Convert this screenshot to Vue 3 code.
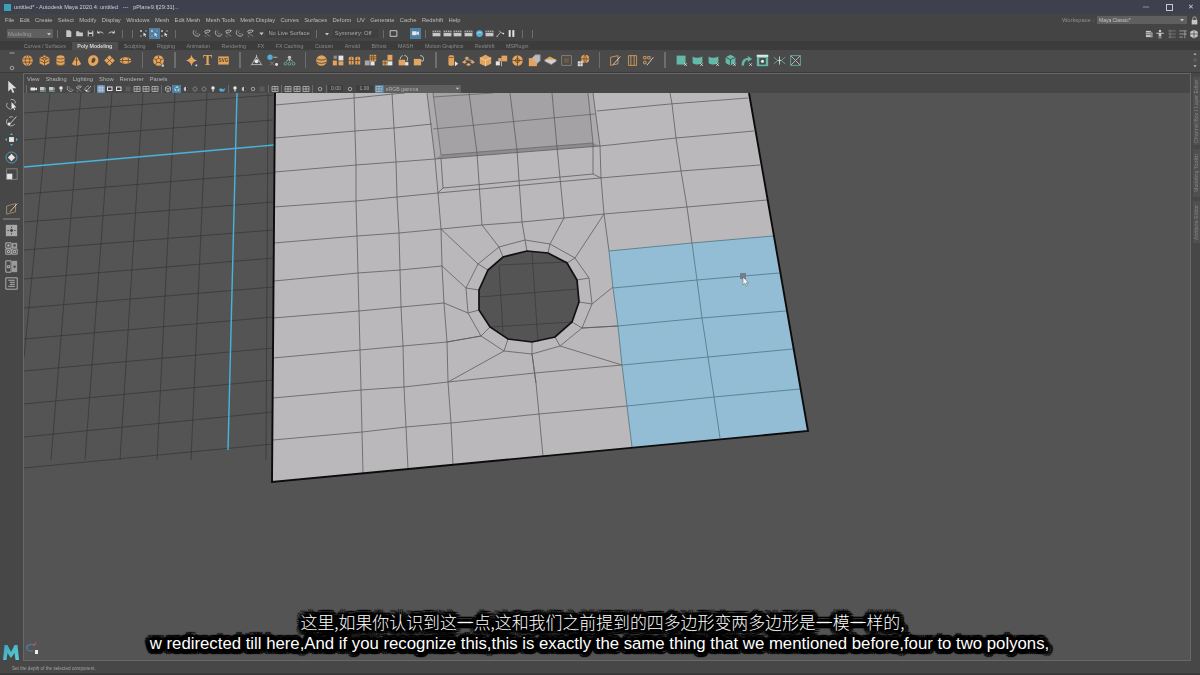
<script setup>
import { h } from 'vue'

const O = '#e2a45f', D = '#6a4a26', N = 'none', G = '#c6c6c6', W = '#e6e6e6', T = '#63b9a7', B = '#52aed6', K = '#3c3c3c', M = '#8d8d8d'
const c = (x, y, r) => `M${x - r} ${y}a${r} ${r} 0 1 0 ${2 * r} 0a${r} ${r} 0 1 0 ${-2 * r} 0Z`
const r = (x, y, w, hh) => `M${x} ${y}h${w}v${hh}h${-w}z`
const xmark = ['M11.5 11.5l3 3M14.5 11.5l-3 3', N, W]

const icons = {
  sphere: [[c(8, 8, 6.4), O], ['M2 6h12M2 10h12M8 1.6c-3.6 3-3.6 9.8 0 12.8M8 1.6c3.6 3 3.6 9.8 0 12.8', N, D]],
  cube: [['M8 1.5l6 3v7l-6 3-6-3v-7z', O], ['M2 4.5l6 3 6-3M8 7.5v7M5 3l6 3M11 3L5 6M2 8l6 3 6-3', N, D]],
  cyl: [['M3 4c0-3.4 10-3.4 10 0v8c0 3.4-10 3.4-10 0z', O], ['M3 4c0 2.8 10 2.8 10 0M3 8c0 2.8 10 2.8 10 0M3 12c0 2.8 10 2.8 10 0', N, D]],
  cone: [['M8 2l5.5 10c0 3-11 3-11 0z', O], ['M5.5 7c1 1 4 1 5 0M8 2v12', N, D]],
  torus: [['M9 1.5c4 .5 6 5 4.5 9s-7 5.5-10 3-2.5-8-.5-10S7 1.3 9 1.5z', O], ['M9 5c1.5 1 1 4-.5 5S5.5 11 6 8.5 7.5 4.5 9 5z', '#484848', D]],
  diamond: [['M8 1.5l6.5 6.5L8 14.5 1.5 8z', O], ['M4.7 4.7l6.6 6.6M11.3 4.7l-6.6 6.6', N, D]],
  disc: [['M8 4c4 0 7 1.6 7 4s-3 4-7 4-7-1.6-7-4 3-4 7-4z', O], ['M1 8h14M5 4.6c-1 2-1 4.8 0 6.8M11 4.6c1 2 1 4.8 0 6.8', N, D]],
  soccer: [[c(8, 8, 6.6), O], ['M8 5l3 2-1 3.5H6L5 7zM8 5V1.5M11 7l3-1.5M10 10.5l2 3M6 10.5l-2 3M5 7L2 5.5', N, D], [r(12, 13, 2.5, 2.5), W]],
  star: [['M8 1c.8 4 3 6.2 7 7-4 .8-6.2 3-7 7-.8-4-3-6.2-7-7 4-.8 6.2-3 7-7z', O], [r(13, 13, 2, 2), W]],
  tt: [['text', 'T', O, 17]],
  svg: [[r(1.5, 3, 13, 10), O], ['text', 'SVG', '#5a3c1e', 5.5]],
  loc: [['M8 3l6 10H2z', N, G], [c(8, 9, 2.5), W], ['M8 1v4M2 13l-1 1M14 13l1 1', N, G]],
  bdot: [[c(5, 4, 3.3), B], ['M5 9l5 5M10 9l-5 5', N, M], ['M9 4h5', N, G], [c(13, 13, 1.8), W]],
  tdots: [[c(8, 4, 2), G], ['M8 6L4 9M8 6l4 3M8 6v3', N, G], [c(3, 12, 1.7), N, T], [c(8, 12, 1.7), N, T], [c(13, 12, 1.7), N, T]],
  globe: [[c(8, 8, 6.5), O], ['M2 6c3 2 9 2 12 0M2 10c3 2 9 2 12 0', N, '#3f3f3f']],
  tiles: [[r(1, 8, 5, 6), O], [r(8, 2, 6, 6), W], [r(8, 9, 6, 5), O], [r(2, 2, 4, 4), M]],
  twocyl: [['M1 5c0-2 6-2 6 0v8H1zM9 5c0-2 6-2 6 0v8H9z', O], ['M1 8h6M9 8h6M4 4v9M12 4v9', N, D]],
  check: [[r(7, 1, 8, 8), O], [r(1, 8, 6, 6), '#a8a8a8'], [r(8, 9, 5, 5), W], ['M9.5 1v8M12 1v8M7 3.5h8M7 6h8', N, D]],
  tile2: [[r(8, 1, 6, 7), O], [r(2, 8, 6, 6), O], [r(8, 9, 6, 5), W], ['M2 11h6M5 8v6', N, D]],
  curve: [[r(2, 7, 8, 7), O], ['M9 2c4 0 5 4 3 7M4 6c0-2 1-3 3-4', N, W], [r(10, 10, 4, 4), W]],
  curve2: [[r(1, 6, 9, 8), O], ['M9 2c4 0 5 4 3 7l-2-1', N, W]],
  cylarrow: [['M3 3c0-2 7-2 7 0v10c0 2-7 2-7 0z', O], ['M3 3c0 2 7 2 7 0', N, D], ['M11 9l4 3-4 3z', W]],
  nodes: [['M6 3l3 2-3 2-3-2zM3 8l3 2-3 2-3-2zM13 8l3 2-3 2-3-2zM8 11l3 2-3 2-3-2z', O], ['M6 7l-3 1M6 7l7 1', N, G]],
  bigcube: [['M8 1l7 3.5v7.5L8 15l-7-3V4.5z', O], ['M1 4.5L8 8l7-3.5M8 8v7', N, '#ead2ad']],
  cubes: [[r(8, 2, 7, 7), O], [r(1, 9, 5, 5), W], [r(4, 5, 4, 4), O], ['M8 9v6', N, G]],
  net: [[c(8, 8, 6.5), O], [c(8, 8, 2.5), N, D], ['M1.5 8h13M8 1.5v13', N, D]],
  boxc: [[r(1, 5, 10, 10), O], ['M5 5l4-4h6v7l-4 4', '#bbb', M]],
  flat: [['M7 3l8 4-6 4-8-4z', O], ['M1 7v2l8 4 6-4V7', '#d2d2d2', M]],
  outl: [[r(2, 2, 12, 12), N, M], ['M2 2l4 4h4l4-4M2 14l4-4h4l4 4M6 6v4M10 6v4', N, D], [r(5, 5, 6, 6), '#6d5a45']],
  tsph: [[c(10, 6, 5), O], ['M5 6h10M10 1c-2 2-2 8 0 10M10 1c2 2 2 8 0 10', N, D], [r(1, 9, 6, 6), W], ['M1 12h6M4 9v6', N, M]],
  pen1: [['M2 4l9-2v10l-9 2z', N, O], ['M5 13L14 3', N, W]],
  pen2: [[r(3, 2, 10, 12), N, O], ['M6 2v12M10 2v12', N, O]],
  pen3: [['M2 3h3v3H2zM7 3h3v3H7zM2 9h3v3H2z', N, O], ['M6 14l8-10', N, W]],
  gsq: [[r(2, 2, 11, 11), T], xmark],
  gcup: [['M2 3c3 2 8 2 12 0v7c-1 3-9 4-12 1z', T], xmark],
  gcube: [['M8 1l6 3v7l-6 3-6-3V4z', T], ['M2 4l6 3 6-3M8 7v7', N, '#3f3f3f'], xmark],
  gcurve: [['M2 14c0-6 3-9 8-9l-1-3 6 4-6 4 1-3c-3 0-5 3-5 7z', T], xmark],
  gbox: [[r(1, 1, 14, 14), T], [r(1, 1, 14, 2.5), W], [r(4, 5, 8, 8), '#484848'], [c(8, 9, 2), W]],
  gx: [['M1 4l5 4-5 4M15 4l-5 4 5 4', N, T], ['M6 8h4M8 3v10', N, W]],
  gx2: [['M2 2l12 12M14 2L2 14', N, G], [r(2, 2, 12, 12), N, T]],
  doc: [['M4 2h6l3 3v9H4z', G]],
  fold: [['M2 4h5l1 2h6v7H2z', G]],
  save: [[r(3, 3, 10, 10), G], [r(5, 3, 6, 3), K], [r(5, 9, 6, 4), K]],
  undo: [['M3 7c3-3 8-2 10 1M3 3v4h4', N, W]],
  redo: [['M13 7c-3-3-8-2-10 1M13 3v4H9', N, W]],
  sel1: [[r(2, 2, 3, 3), W], [r(11, 2, 3, 3), M], [r(2, 11, 3, 3), M], ['M8 6v7l2-2 1.5 3 1-.5-1.5-3h2.5z', W]],
  magnet: [['M4 2c-3 3-2 8 2 10s8 0 8-3', N, G], ['M8 3a3 3 0 1 0 4 4', N, M]],
  magnet2: [['M3 4c2-2 7-3 10-1l-3 3c-2-1-4 0-5 2z', N, G], ['M5 8l8 5M3 12l3 2', N, M]],
  cam: [[r(2, 4, 8, 7), W], ['M10 6l4-2v7l-4-2z', W]],
  box: [[r(2, 3, 12, 10), N, W]],
  cam2: [[r(2, 4, 9, 7), G], ['M11 6l3-1v6l-3-1z', M], ['M2 13h12', N, T]],
  film: [[r(1, 3, 14, 10), G], ['M1 6h14', N, K], ['M4 3v3M8 3v3M12 3v3', N, K]],
  swirl: [[c(8, 8, 6), B], ['M4 8c2-3 6-3 8 0', N, W]],
  graph: [['M2 13l6-7M8 6l5 2M8 6l-2-3', N, G], [c(2, 13, 1.5), T], [c(13, 8, 1.5), W]],
  pause: [[r(3, 2, 3.5, 12), W], [r(9.5, 2, 3.5, 12), W]],
  fdown: [['M4 6h8l-4 5z', G]],
  arrow: [['M4 1v13l3.2-3 2.3 5 2-1-2.2-4.8H14z', '#dcdcdc']],
  lasso: [['M7 2c4-1 7 2 5 5M3 6c-2 3-1 6 2 7M5 13l2 1', N, G], ['M8 5v9l2-2 1.5 3 1-.6-1.4-2.8H14z', W]],
  paint: [['M3 5c-2 3-1 7 2 8s6 0 7-2M5 3c2-1 4-1 5 0', N, G], ['M6 11L14 2', N, W], [c(5, 11, 1.7), W]],
  move: [[r(5, 5, 6, 6), W], ['M8 0l2 2.5H6zM8 16l2-2.5H6zM0 8l2.5-2v4zM16 8l-2.5-2v4z', B]],
  rotate: [[c(8, 8, 6.8), N, B], ['M8 3.5L12.5 8 8 12.5 3.5 8z', W]],
  scale: [[r(2, 7, 7, 7), W], [r(2, 1, 13, 13), N, M]],
  lattice: [['M2 5l11-3v10L2 15z', N, '#b89468'], ['M6 12L15 2', N, W]],
  pane1: [[r(1, 1, 14, 14), '#a8a8a8'], ['M8 3v2M8 11v2M3 8h2M11 8h2', N, K], [c(8, 8, 1.8), K]],
  pane4: [[r(1, 1, 6.5, 6.5), N, G], [r(8.5, 1, 6.5, 6.5), '#9a9a9a'], [r(1, 8.5, 6.5, 6.5), N, G], [r(8.5, 8.5, 6.5, 6.5), N, G], [r(3, 3, 2.5, 2.5), G], [r(10.5, 3, 2.5, 2.5), K], [r(3, 10.5, 2.5, 2.5), N, G], [r(10.5, 10.5, 2.5, 2.5), N, G]],
  pane2: [[r(1, 1, 6.5, 14), N, G], [r(8.5, 1, 6.5, 14), '#9a9a9a'], [r(3, 7, 2.5, 2.5), N, G], [r(10.5, 7, 2.5, 2.5), K]],
  outliner: [[r(1, 1, 14, 14), N, G], ['M4 4h8M6 6.5h6M6 9h6M4 11.5h8', N, G]],
  pcam: [[r(1, 5, 9, 6), W], ['M10 7l4-2v6l-4-2z', W]],
  pw: [[r(2, 3, 11, 9), W], [r(4, 5, 7, 5), K]],
  pcube: [['M8 2l5 3v6l-5 3-5-3V5z', N, G], ['M3 5l5 3 5-3M8 8v6', N, G]],
  pscube: [['M8 2l5 3v6l-5 3-5-3V5z', '#8fd0e6'], ['M3 5l5 3 5-3M8 8v6', N, K]],
  pdot: [[c(8, 8, 4.5), G], ['M8 3.5a4.5 4.5 0 0 1 0 9z', K]],
  pnet: [[c(8, 8, 5), M], ['M3 8h10M8 3v10M4.5 4.5l7 7M11.5 4.5l-7 7', N, K]],
  pbulb: [[c(8, 6, 3.5), W], [r(6.5, 9, 3, 4), G]],
  ptea: [['M2 9c1-3 7-3 8 0l5-3-3 7H4z', B]],
  phal: [[c(8, 8, 3.5), N, G]],
  pgrid: [[r(2, 3, 12, 10), N, G], ['M2 8h12M8 3v10', N, G]],
  pgrid2: [[r(1, 1, 14, 14), '#7397b8'], ['M1 5.7h14M1 10.3h14M5.7 1v14M10.3 1v14', N, '#c9d7e2']],
  pdim: [[r(3, 3, 10, 10), '#5b5b5b']],
  lock: [[r(3, 7, 10, 8), G], ['M5 7V4c0-3.5 6-3.5 6 0v3', N, G]],
  man: [[c(8, 3, 2), G], ['M2 6h12v1.5h-4V15H8.8v-4H7.2v4H6V7.5H2z', G]],
  rows: [['M2 3h12M2 8h12M2 13h12M5 1v14', N, M]],
  rows2: [['M2 3h12M2 8h12M2 13h6M11 3v12', N, G]],
  hexb: [['M8 1l6 3.5v7L8 15l-6-3.5v-7z', G], ['M2 8h12M8 1v14', N, K]],
  geom: [['M3 3h8v10H3z', G], ['M11 4l3 2v7l-3 1z', M], ['M3 6h8M3 9h8', N, K]],
  gball: [[c(8, 8, 5), '#5d5d5d']],
  upd: [['M4 10h8L8 5z', G]],
  dnd: [['M4 6h8l-4 5z', G]],
  minus: [['M3 8h10', N, G]],
  ring: [[c(8, 8, 3.5), N, G]]
}

const Icon = (props) => {
  const size = props.size || 16
  const kids = (icons[props.name] || []).map((s) => {
    if (s[0] === 'text') {
      return h('text', { x: 8, y: s[3] > 10 ? 14 : 10, fill: s[2], 'font-size': s[3], 'text-anchor': 'middle', 'font-family': s[3] > 10 ? '"Liberation Serif", serif' : '"Liberation Sans", sans-serif', 'font-weight': 700 }, s[1])
    }
    return h('path', { d: s[0], fill: s[1] || N, stroke: s[2] || N, 'stroke-width': size < 10 ? 1.4 : 1, 'stroke-linejoin': 'round' })
  })
  return h('svg', { width: size, height: size, viewBox: '0 0 16 16', style: 'display:block' }, kids)
}
Icon.props = ['name', 'size']

const menus = ['File', 'Edit', 'Create', 'Select', 'Modify', 'Display', 'Windows', 'Mesh', 'Edit Mesh', 'Mesh Tools', 'Mesh Display', 'Curves', 'Surfaces', 'Deform', 'UV', 'Generate', 'Cache', 'Redshift', 'Help']
const tabs = ['Curves / Surfaces', 'Poly Modeling', 'Sculpting', 'Rigging', 'Animation', 'Rendering', 'FX', 'FX Caching', 'Custom', 'Arnold', 'Bifrost', 'MASH', 'Motion Graphics', 'Redshift', 'MSPlugin']
const panelMenus = ['View', 'Shading', 'Lighting', 'Show', 'Renderer', 'Panels']

const status1 = ['|', 'doc', 'fold', 'save', 'undo', 'redo', '|', '|', 'sel1', '*sel1', 'sel1', '|', '', 'magnet', 'magnet2', 'magnet', 'magnet2', 'magnet', 'magnet2', 'fdown']
const status3 = ['|', 'fdown']
const status4 = ['|', 'box', '', '*cam', '|', 'film', 'film', 'film', 'film', 'swirl', 'film', 'graph', 'pause', '|', '|']

const shelf = ['sphere', 'cube', 'cyl', 'cone', 'torus', 'diamond', 'disc', '|', 'soccer', '|', 'star', 'tt', 'svg', '|', 'loc', 'bdot', 'tdots', '|',
  'globe', 'tiles', 'twocyl', 'check', 'tile2', 'curve', 'curve2', '|',
  'cylarrow', 'nodes', 'bigcube', 'cubes', 'net', 'boxc', 'flat', 'outl', 'tsph', '|', 'pen1', 'pen2', 'pen3', '|',
  'gsq', 'gcup', 'gcup', 'gcube', 'gcurve', 'gbox', 'gx', 'gx2']

const panelGroups = [
  ['pcam', 'cam2', 'cam2', 'pbulb', 'magnet', 'magnet2', 'paint'],
  ['*pgrid2', 'pw', 'pw', 'pdim', 'pgrid', 'pgrid', 'pgrid'],
  ['pcube', '*pscube', 'pdot', 'pnet', 'pnet', 'pbulb', 'ptea'],
  ['pbulb', 'pdot', 'phal', 'pdim'],
  ['pgrid'],
  ['pgrid', 'pgrid', 'pgrid'],
  ['phal']
]

const tools = ['arrow', 'lasso', 'paint', 'move', 'rotate', 'scale']
const tools2 = ['pane4', 'pane2', 'outliner']

const hLines = [
  '275,105 354,98 393,94 405,93',
  '275,138 355,131 394,128 432,124',
  '275,172 356,165 396,162 435,159 600,146 676,138 754,131',
  '274,207 356,201 397,197 438,193 545,183 600,178 681,171 760,165',
  '274,243 357,236 399,233 441,229 482,225 522,222 564,218 604,214 687,207 767,200',
  '274,281 358,273 400,270 442,266',
  '273,318 359,311 401,307 444,303',
  '273,358 360,350 403,346 447,342 481,336',
  '582,328 618,326',
  '273,398 361,390 404,387 448,382 535,373 622,365',
  '273,440 362,432 406,427 451,423 539,414 627,406',
  '597,111 670,104 748,98',
  '443,188 593,174 601,178'
]
const vLines = [
  '354,93 355,131 356,165 356,201 357,236 358,273 359,311 360,350 361,390 362,432 363,473',
  '392,93 394,128 396,162 397,197 399,233 400,270 401,307 403,346 404,387 406,427 408,469',
  '427,93 435,159 438,193 441,229 442,266 444,303 447,342 448,382 451,423 453,464',
  '441,158 443,188 438,193',
  '469,93 477,153 480,197 482,225',
  '510,93 517,150 519,180 522,222',
  '552,93 557,147 560,178 564,218',
  '593,93 600,146 601,178 604,214',
  '588,93 593,143 593,174',
  '670,93 672,104 676,138 681,171 687,207 692,243',
  '532,354 536,383 539,414 543,456',
  '604,214 609,251'
]
const recessLines = [
  '433,97 493,93',
  '433,129 595,114',
  '433,93 441,155 593,143'
]
const blueLines = [
  '609,251 692,243 773,236',
  '613,288 697,280 779,273',
  '618,326 702,318 786,311',
  '622,365 708,357 793,349',
  '627,406 714,397 800,389',
  '692,243 697,280 702,318 708,357 714,397 720,438',
  '609,251 613,288 618,326 622,365 627,406 632,447'
]

const inner = [[527, 251], [548, 253], [567, 263], [577, 280], [579, 302], [572, 322], [555, 337], [532, 342], [508, 339], [490, 327], [479, 310], [479, 290], [488, 270], [503, 257]]
const outer = [[525, 240], [550, 244], [575, 258], [589, 278], [592, 304], [582, 328], [560, 346], [532, 354], [504, 351], [481, 336], [468, 313], [466, 288], [478, 264], [499, 247]]
const innerStr = inner.map((p) => p.join(',')).join(' ')
const outerStr = outer.map((p) => p.join(',')).join(' ')
const spokes = inner.map((p, i) => `${p.join(',')} ${outer[i].join(',')}`)
const outward = [
  '525,240 522,222', '550,244 564,218', '575,258 604,214', '592,304 613,287', '582,328 618,326',
  '560,346 622,365', '532,354 536,383', '504,351 448,382', '481,336 447,342', '468,313 444,303',
  '466,288 442,266', '478,264 441,229', '499,247 482,225'
]
const meshPath = 'M275 93L749 93L808 431L272 482Z M' + inner.map((p) => p.join(' ')).join('L') + 'Z'

const gridH = [[113, 95], [140, 120], [194, 173], [222, 202], [250, 230], [279, 258], [308, 287], [339, 317], [371, 348], [404, 380], [437, 412], [468, 444]]
const gridV = [[50, 14], [81, 51], [112, 85], [143, 120], [175, 157], [207, 191], [268, 266]]
const holeGrid = ['499,265 503,333', '532,252 538,342', '500,265 567,262', '479,297 578,289', '490,327 572,322']
const pts = (a, b, x0, x1) => `M${x0} ${a}L${x1} ${b}`
const clipLeft = (a, b) => {
  if (b >= 24) return `M${a} 93L${b} 460`
  const t = (a - 24) / (a - b)
  return `M${a} 93L24 ${93 + t * 367}`
}
const gridPath = gridH.map(([a, b]) => pts(a, b, 24, 273)).join('') + gridV.map(([a, b]) => clipLeft(a, b)).join('')
</script>

<template>
  <div class="app">
    <div class="soft">
      <header class="title">
        <span class="logo-m"></span>
        <span class="title-text">untitled* - Autodesk Maya 2020.4: untitled &nbsp; --- &nbsp; pPlane9.f[29:31]...</span>
        <span class="win-btns">
          <Icon name="minus" :size="10" />
          <span class="win-sq"></span>
          <span class="win-x">✕</span>
        </span>
      </header>

      <nav class="menu">
        <span v-for="m in menus" :key="m" class="menu-item">{{ m }}</span>
        <span class="spacer"></span>
        <span class="ws-label">Workspace :</span>
        <span class="ws-drop">Maya Classic*<Icon name="dnd" :size="8" class="drop-ar" /></span>
        <Icon name="lock" :size="9" class="lock" />
      </nav>

      <div class="status-line">
        <span class="drop modeling">Modeling<Icon name="dnd" :size="8" /></span>
        <template v-for="(s, i) in status1" :key="'a' + i">
          <span v-if="s === '|'" class="cell10"><i class="sep"></i></span>
          <span v-else class="cell10" :class="{ on: s[0] === '*' }"><Icon v-if="s" :name="s.replace('*', '')" :size="9" /></span>
        </template>
        <span class="field f-live">No Live Surface</span>
        <template v-for="(s, i) in status3" :key="'b' + i">
          <span v-if="s === '|'" class="cell10"><i class="sep"></i></span>
          <span v-else class="cell10"><Icon :name="s" :size="8" /></span>
        </template>
        <span class="field f-sym">Symmetry: Off</span>
        <template v-for="(s, i) in status4" :key="'c' + i">
          <span v-if="s === '|'" class="cell10"><i class="sep"></i></span>
          <span v-else class="cell10" :class="{ on: s[0] === '*' }"><Icon v-if="s" :name="s.replace('*', '')" :size="9" /></span>
        </template>
        <span class="spacer"></span>
        <span class="right-icons">
          <Icon name="geom" :size="10" /><Icon name="man" :size="10" /><Icon name="rows" :size="10" /><Icon name="rows2" :size="10" /><Icon name="hexb" :size="10" />
        </span>
      </div>

      <div class="shelf-tabs">
        <span v-for="t in tabs" :key="t" class="tab" :class="{ active: t === 'Poly Modeling' }">{{ t }}</span>
      </div>

      <div class="shelf">
        <div class="shelf-side">
          <Icon name="minus" :size="8" />
          <Icon name="ring" :size="8" />
        </div>
        <div class="shelf-icons">
          <template v-for="(s, i) in shelf" :key="'s' + i">
            <span v-if="s === '|'" class="cell16"><i class="sep tall"></i></span>
            <span v-else class="cell16"><Icon :name="s" :size="13" /></span>
          </template>
        </div>
        <div class="spacer"></div>
        <div class="shelf-scroll">
          <Icon name="upd" :size="6" />
          <Icon name="gball" :size="6" />
          <Icon name="dnd" :size="6" />
        </div>
      </div>
    </div>

    <main class="main">
      <aside class="tools soft">
        <span v-for="t in tools" :key="t" class="tool"><Icon :name="t" :size="13" /></span>
        <span class="tool lat"><Icon name="lattice" :size="13" /></span>
        <i class="tool-div"></i>
        <span class="tool"><Icon name="pane1" :size="13" /></span>
        <span v-for="t in tools2" :key="t" class="tool"><Icon :name="t" :size="13" /></span>
        <svg class="maya" width="16" height="15" viewBox="0 0 16 15">
          <defs>
            <linearGradient id="mg" x1="0" y1="0" x2="1" y2="1">
              <stop offset="0" stop-color="#3aa6bb" />
              <stop offset="1" stop-color="#5fd1d8" />
            </linearGradient>
          </defs>
          <path d="M0 15L1.5 0h3L8 7l3.500-7h3L16 15h-3.500l-1-7L8 13 4.500 8l-1 7z" fill="url(#mg)" />
        </svg>
      </aside>

      <section class="viewport">
        <div class="panel-menu soft">
          <span v-for="p in panelMenus" :key="p" class="pm">{{ p }}</span>
        </div>
        <div class="panel-bar soft">
          <i class="sep first"></i>
          <template v-for="(g, gi) in panelGroups" :key="gi">
            <span v-for="(s, i) in g" :key="i" class="cell9" :class="{ on: s[0] === '*' }"><Icon :name="s.replace('*', '')" :size="8" /></span>
            <span class="psep"><i class="sep"></i></span>
          </template>
          <span class="pfield">0.00</span>
          <span class="cell9 wide"><Icon name="phal" :size="8" /></span>
          <span class="pfield f2">1.00</span>
          <span class="cell9 on"><Icon name="pgrid" :size="8" /></span>
          <span class="pdrop">sRGB gamma<Icon name="dnd" :size="7" /></span>
        </div>
        <svg class="scene" width="1166" height="567" viewBox="24 93 1166 567">
          <path :d="gridPath" stroke="#333" stroke-opacity=".8" fill="none" stroke-width=".8" />
          <path d="M24 167L274 145M237 93L228 450" stroke="#47b4de" stroke-width="1.4" fill="none" />
          <path :d="meshPath" fill="#bab8ba" fill-rule="evenodd" />
          <polygon points="433,93 441,155 593,143 588,93" fill="#a4a2a4" />
          <polygon points="427,93 435,159 441,155 433,93" fill="#acaaac" />
          <polygon points="588,93 593,143 600,146 593,93" fill="#acaaac" />
          <polygon points="435,159 600,146 593,143 441,155" fill="#8e8c8e" />
          <polygon points="609,251 692,243 773,236 808,431 632,447" fill="#93bdd4" />
          <polyline v-for="(l, i) in recessLines" :key="'r' + i" :points="l" fill="none" stroke="#6a686a" stroke-width=".8" />
          <polyline v-for="(l, i) in hLines" :key="'h' + i" :points="l" fill="none" stroke="#5f5d5f" stroke-width=".8" />
          <polyline v-for="(l, i) in vLines" :key="'v' + i" :points="l" fill="none" stroke="#5f5d5f" stroke-width=".8" />
          <polyline v-for="(l, i) in outward" :key="'o' + i" :points="l" fill="none" stroke="#5f5d5f" stroke-width=".8" />
          <polyline v-for="(l, i) in spokes" :key="'s' + i" :points="l" fill="none" stroke="#5f5d5f" stroke-width=".8" />
          <polygon :points="outerStr" fill="none" stroke="#5f5d5f" stroke-width=".8" />
          <polyline v-for="(l, i) in blueLines" :key="'b' + i" :points="l" fill="none" stroke="#4b7686" stroke-width=".8" />
          <polyline v-for="(l, i) in holeGrid" :key="'g' + i" :points="l" fill="none" stroke="#3a3a3a" stroke-width=".7" />
          <polygon :points="innerStr" fill="none" stroke="#111" stroke-width="1.7" />
          <path d="M275 93L272 482L808 431L749 93" fill="none" stroke="#0c0c0c" stroke-width="1.9" />
          <rect x="740" y="273" width="6" height="6" fill="#6f7f8c" />
          <path d="M743 277v8l1.800-1.700 1.300 2.800 1.200-.6-1.200-2.700h2.500z" fill="#f2f2f2" stroke="#444" stroke-width=".4" />
          <path d="M27 646c3-2 6-2 8 0M27 646v3c0 2 4 2 6 2" fill="none" stroke="#4a8fd0" stroke-width="1" />
          <path d="M34 645l2-2" stroke="#d04a4a" stroke-width="1.5" />
          <rect x="35" y="650" width="3" height="4" fill="#eee" />
        </svg>
      </section>

      <aside class="side-tabs soft">
        <span class="vt t1">Channel Box / Layer Editor</span>
        <span class="vt t2">Modeling Toolkit</span>
        <span class="vt t3">Attribute Editor</span>
      </aside>
    </main>

    <footer class="statusbar soft">Set the depth of the selected component.</footer>

    <div class="subs">
      <div class="cn">这里,如果你认识到这一点,这和我们之前提到的四多边形变两多边形是一模一样的,</div>
      <div class="en">w redirected till here,And if you recognize this,this is exactly the same thing that we mentioned before,four to two polyons,</div>
    </div>
  </div>
</template>

<style>
html, body { margin: 0; background: #474747; }
</style>

<style scoped>
.app { position: relative; width: 1200px; height: 675px; overflow: hidden; display: flex; flex-direction: column; background: #474747; color: #b9b9b9; font-family: "Liberation Sans", Arial, sans-serif; font-size: 5.8px; }
.soft { filter: blur(.28px); }
.spacer { flex: 1; }

.title { height: 14px; background: #3e404d; display: flex; align-items: center; }
.logo-m { width: 7px; height: 7px; margin-left: 4px; margin-right: 3px; background: #3d9fb3; }
.title-text { font-size: 5.650px; color: #cfcfcf; }
.win-btns { margin-left: auto; display: flex; align-items: center; gap: 15px; padding-right: 5px; }
.win-sq { width: 5px; height: 5px; border: 1px solid #c8c8c8; }
.win-x { font-size: 7px; color: #d0d0d0; width: 7px; }

.menu { height: 12px; background: #444; display: flex; align-items: center; padding-left: 5px; }
.menu-item { margin-right: 5.370px; color: #bdbdbd; white-space: nowrap; }
.ws-label { color: #8f8f8f; margin-right: 3px; }
.ws-drop { width: 90px; height: 8px; background: #5f5f5f; color: #c6c6c6; display: flex; align-items: center; justify-content: space-between; padding-left: 2px; box-sizing: border-box; font-size: 5px; }
.drop-ar { margin-right: 1px; }
.lock { margin: 0 1px 0 3px; }

.status-line { height: 15px; background: #444; display: flex; align-items: center; padding-left: 7px; }
.drop { display: flex; justify-content: space-between; align-items: center; background: #5f5f5f; color: #9d9d9d; height: 9px; padding-left: 1px; box-sizing: border-box; }
.modeling { width: 45.650px; }
.cell10 { width: 10.700px; height: 11px; flex: none; display: flex; align-items: center; justify-content: center; }
.on { background: #4f7fa3; }
.sep { display: block; width: 1px; height: 8px; background: #6b6b6b; }
.sep.tall { height: 16px; width: 1.500px; background: #6e6e6e; }
.field { background: #3f3f3f; color: #a8a8a8; height: 9px; line-height: 9px; padding-left: 2px; box-sizing: border-box; flex: none; }
.f-live { width: 45px; }
.f-sym { width: 45px; }
.right-icons { display: flex; gap: 1.200px; padding-right: 1px; }

.shelf-tabs { height: 9px; background: #3c3c3c; display: flex; align-items: flex-end; padding-left: 18px; }
.tab { padding: 0 5.750px; height: 8px; line-height: 8px; font-size: 5.300px; color: #8b8b8b; white-space: nowrap; }
.tab.active { background: #4f4f4f; color: #d5d5d5; font-weight: 700; letter-spacing: -.08px; }

.shelf { height: 23px; background: #4a4a4a; display: flex; align-items: center; border-bottom: 1px solid #3b3b3b; box-sizing: border-box; padding-bottom: 2px; }
.shelf-side { width: 19.800px; flex: none; display: flex; flex-direction: column; align-items: center; gap: 7px; padding-left: 4px; box-sizing: border-box; }
.shelf-icons { display: flex; }
.cell16 { width: 16.330px; flex: none; display: flex; justify-content: center; align-items: center; height: 18px; }
.shelf-scroll { display: flex; flex-direction: column; align-items: center; padding-right: 2px; }

.main { flex: 1; display: flex; min-height: 0; }
.tools { width: 23px; flex: none; display: flex; flex-direction: column; align-items: center; padding-top: 5px; box-sizing: border-box; }
.tool { height: 17.600px; flex: none; display: flex; align-items: center; justify-content: center; }
.lat { margin-top: 16px; }
.tool-div { display: block; width: 17px; height: 2px; background: #6a6a6a; margin: 1px 0 2px; }
.maya { margin-top: auto; margin-bottom: 1px; margin-left: -1px; }

.viewport { flex: 1; min-width: 0; display: flex; flex-direction: column; border: 1px solid #686868; background: #545454; }
.panel-menu { height: 10px; background: #474747; display: flex; align-items: center; padding-left: 3px; }
.pm { margin-right: 6px; color: #b5b5b5; }
.panel-bar { height: 9px; background: #474747; display: flex; align-items: center; padding-left: 2px; }
.first { margin-right: 2.600px; }
.cell9 { width: 8.950px; height: 8px; flex: none; display: flex; align-items: center; justify-content: center; }
.wide { margin: 0 1.500px 0 2px; }
.psep { width: 4.400px; flex: none; display: flex; justify-content: center; }
.pfield { width: 15px; height: 7px; line-height: 7px; background: #3f3f3f; color: #a9a9a9; text-align: center; flex: none; font-size: 5px; }
.f2 { width: 17px; margin-right: 2px; }
.pdrop { width: 77px; height: 8px; background: #5f5f5f; color: #b0b0b0; display: flex; align-items: center; justify-content: space-between; padding-left: 2px; box-sizing: border-box; font-size: 5.200px; flex: none; }
.scene { display: block; flex: none; filter: blur(.3px); }

.side-tabs { width: 9px; flex: none; display: flex; flex-direction: column; align-items: flex-end; padding-top: 4px; box-sizing: border-box; }
.vt { writing-mode: vertical-rl; transform: rotate(180deg); background: #505050; color: #858585; font-size: 5.300px; width: 7px; line-height: 7px; text-align: center; margin-bottom: 4px; white-space: nowrap; }
.t1 { height: 68px; }
.t2 { height: 48px; }
.t3 { height: 42px; }

.statusbar { height: 14px; flex: none; background: #474747; color: #a3a3a3; font-size: 4.600px; line-height: 15px; padding-left: 12px; border-bottom: 2px solid #3a3a3a; box-sizing: border-box; }

.subs { position: absolute; left: 0; right: 0; top: 611px; text-align: center; color: #fff; white-space: nowrap; text-shadow: 5px 0 1px #000, 4.600px 1.900px 1px #000, 3.500px 3.500px 1px #000, 1.900px 4.600px 1px #000, 0 5px 1px #000, -1.900px 4.600px 1px #000, -3.500px 3.500px 1px #000, -4.600px 1.900px 1px #000, -5px 0 1px #000, -4.600px -1.900px 1px #000, -3.500px -3.500px 1px #000, -1.900px -4.600px 1px #000, 0 -5px 1px #000, 1.900px -4.600px 1px #000, 3.500px -3.500px 1px #000, 4.600px -1.900px 1px #000, 2.500px 0 0 #000, -2.500px 0 0 #000, 0 2.500px 0 #000, 0 -2.500px 0 #000, 1.800px 1.800px 0 #000, -1.800px 1.800px 0 #000, 1.800px -1.800px 0 #000, -1.800px -1.800px 0 #000, 0 0 1px #000; }
.cn { font-family: "Noto Sans CJK SC", "Liberation Sans", sans-serif; font-size: 16.900px; line-height: 21px; font-weight: 300; padding-left: 5px; }
.en { font-family: "Liberation Sans", Arial, sans-serif; font-size: 16.750px; line-height: 21px; margin-top: 1px; padding-right: 1px; }
</style>
